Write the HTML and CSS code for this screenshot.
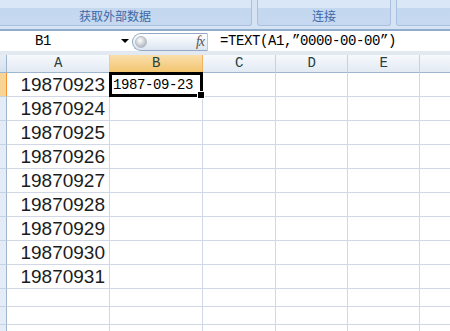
FILE: index.html
```html
<!DOCTYPE html>
<html lang="zh-CN">
<head>
  <meta charset="UTF-8">
  <meta name="viewport" content="width=device-width, initial-scale=1.0">
  <title>Excel</title>
  <link rel="stylesheet" href="styles.css">
</head>
<body>
  <div class="ribbon">
    <div class="group group-data"><span class="group-label">获取外部数据</span></div>
    <div class="group group-conn"><span class="group-label">连接</span></div>
    <div class="group group-more"></div>
  </div>
  <div class="formula-bar">
    <div class="name-box"><span class="name">B1</span><span class="arrow"></span></div>
    <div class="fx-pill"><span class="ball"></span><span class="fx">fx</span></div>
    <div class="formula">=TEXT(A1,”0000-00-00”)</div>
  </div>
  <div class="sheet"></div>
  <script>
    const cols = ['A', 'B', 'C', 'D', 'E', ''];
    const values = ['19870923', '19870924', '19870925', '19870926', '19870927',
      '19870928', '19870929', '19870930', '19870931', '', '', ''];
    const sheet = document.querySelector('.sheet');

    function cell(cls, text) {
      const div = document.createElement('div');
      div.className = cls;
      div.innerText = text || '';
      sheet.appendChild(div);
      return div;
    }

    cell('corner');
    cols.forEach(c => {
      cell(c == 'B' ? 'col-head active' : 'col-head', c);
    });
    values.forEach((v, i) => {
      cell(i == 0 ? 'row-head active' : 'row-head');
      cell('cell num', v);
      if (i == 0) {
        cell('cell date selected', '1987-09-23');
      } else {
        cell('cell');
      }
      cell('cell');
      cell('cell');
      cell('cell');
      cell('cell');
    });
  </script>
</body>
</html>
```

FILE: styles.css
```css
*{
  margin: 0;
  padding: 0;
  box-sizing: border-box;
}
body{
  width: 450px;
  height: 331px;
  overflow: hidden;
  background: #fff;
  font-family: "Liberation Sans", Arial, sans-serif;
}
.ribbon{
  display: flex;
  gap: 5px;
  height: 31px;
  padding-bottom: 3px;
  background: #d6e3f3;
  border-bottom: 2px solid #8fabcd;
  overflow: hidden;
}
.group{
  flex: none;
  height: 26px;
  border: 1px solid #a9c1de;
  border-top: none;
  border-radius: 0 0 3px 3px;
  background: linear-gradient(to bottom, #dae7f6 0, #dae7f6 8px, #c3d7ef 8px, #c6d9f0 100%);
  text-align: center;
}
.group-data{
  width: 274px;
  margin-left: -22px;
}
.group-conn{
  width: 134px;
}
.group-more{
  width: 80px;
}
.group-label{
  display: block;
  padding-top: 7px;
  font-family: "Noto Sans CJK SC", sans-serif;
  font-size: 12px;
  line-height: 18px;
  color: #3d68a6;
}
.formula-bar{
  display: flex;
  height: 24px;
  background: #fff;
  border-bottom: 4px solid #e3e9f1;
}
.name-box{
  display: flex;
  align-items: center;
  width: 132px;
  padding-left: 35px;
}
.name, .formula, .col-head, .date{
  font-family: "Liberation Mono", "DejaVu Sans Mono", monospace;
  font-size: 14px;
  letter-spacing: -0.4px;
  color: #000;
}
.arrow{
  margin-left: 70px;
  width: 0;
  height: 0;
  border-left: 4px solid transparent;
  border-right: 4px solid transparent;
  border-top: 4px solid #000;
}
.fx-pill{
  display: flex;
  align-items: center;
  justify-content: space-between;
  width: 76px;
  height: 18px;
  margin-top: 2px;
  padding: 0 3px 0 2px;
  border: 1px solid #94a9c6;
  border-right: 1px solid #b8c7da;
  border-radius: 9px 0 0 9px;
  background: linear-gradient(to bottom, #ffffff, #dbe5f2);
}
.ball{
  width: 12px;
  height: 12px;
  border-radius: 50%;
  background: radial-gradient(circle at 40% 35%, #ffffff, #c2c7ce 60%, #9aa2ad);
  border: 1px solid #b5bdc8;
}
.fx{
  font-family: "Liberation Serif", serif;
  font-style: italic;
  font-size: 14px;
  color: #555;
  letter-spacing: -1px;
}
.formula{
  flex: 1;
  padding-left: 12px;
  line-height: 20px;
}
.sheet{
  display: grid;
  grid-template-columns: 7px 103px 93px 73px 72px 72px 80px;
  grid-template-rows: 18px repeat(9, 24px) repeat(3, 18px);
  width: 500px;
}
.corner{
  background: linear-gradient(to bottom, #e8eef7, #d6e1ef);
  border-right: 1px solid #9eb6ce;
  border-bottom: 1px solid #9eb6ce;
}
.col-head{
  background: linear-gradient(to bottom, #f6f9fc, #e3eaf3);
  border-right: 1px solid #c5d2e1;
  border-bottom: 1px solid #9eb6ce;
  text-align: center;
  line-height: 17px;
  color: #27403d;
}
.col-head.active{
  background: linear-gradient(to bottom, #f9dfac, #f3c56f);
  border-right-color: #f2b360;
  border-bottom-color: #f29436;
}
.row-head{
  background: #e4ecf7;
  border-right: 1px solid #9eb6ce;
  border-bottom: 1px solid #c5d3e3;
}
.row-head.active{
  background: #f8d596;
  border-right-color: #f29436;
}
.cell{
  border-right: 1px solid #d0d7e5;
  border-bottom: 1px solid #d0d7e5;
}
.num{
  padding-right: 4px;
  text-align: right;
  font-size: 19px;
  line-height: 24px;
  color: #1c1c1c;
}
.date{
  position: relative;
  padding-left: 3px;
  line-height: 24px;
}
.selected::before{
  content: "";
  position: absolute;
  top: -1px;
  left: -1px;
  right: -1px;
  bottom: -1px;
  border: 3px solid #000;
}
.selected::after{
  content: "";
  position: absolute;
  right: -3px;
  bottom: -3px;
  width: 6px;
  height: 6px;
  background: #000;
  border: 1px solid #fff;
}
```
